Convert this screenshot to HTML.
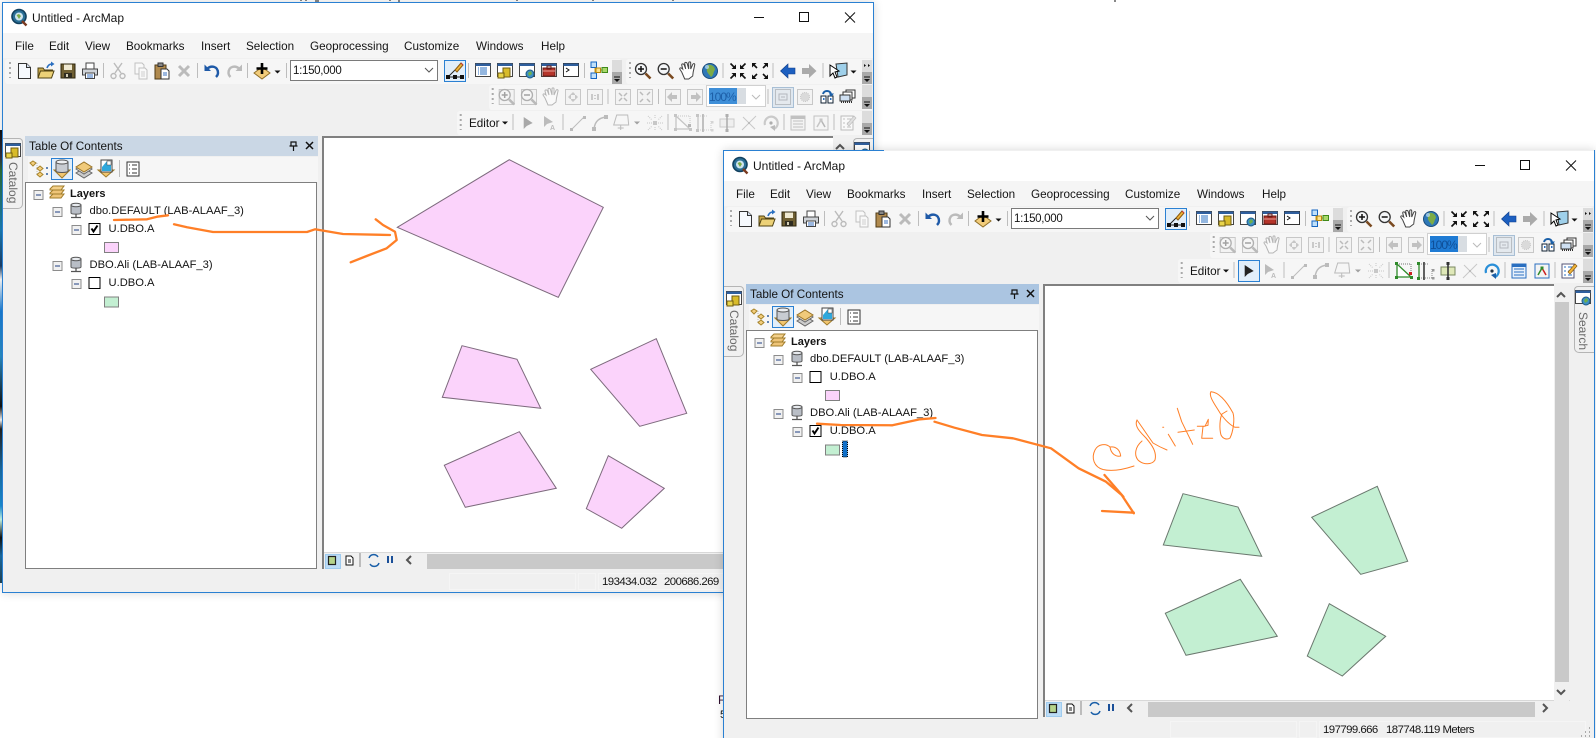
<!DOCTYPE html>
<html><head><meta charset="utf-8"><title>ArcMap</title>
<style>
html,body{margin:0;padding:0;background:#fff;width:1596px;height:738px;overflow:hidden}
#root{position:absolute;left:0;top:0;width:1596px;height:738px;overflow:hidden;background:#fff;font-family:"Liberation Sans",sans-serif;color:#141414}
.w{position:absolute;width:900px;height:592px}
.w>div,.abs{position:absolute;box-sizing:border-box}
.t{position:absolute;white-space:nowrap;line-height:16px;height:16px;font-size:11.7px}
.tr{font-size:11.2px}
.st{font-size:11.4px;letter-spacing:-.55px}
.v{position:absolute;white-space:nowrap;font-size:12px;line-height:14px;color:#6a6a6a;transform-origin:0 0;transform:rotate(90deg)}
.tb{background:#f6f6f6;border-radius:3px}
svg{position:absolute;left:0;top:0;overflow:visible}
.d{filter:grayscale(1);opacity:.36}
</style></head><body>
<div id="root">

<svg width="0" height="0" style="position:absolute">
<defs>
<g id="new"><path d="M-6-7.500h8l4 4V7.500H-6z" fill="#f6f9fd" stroke="#333"/><path d="M2-7.500v4h4" fill="#d5dfee" stroke="#333"/></g>
<g id="open"><path d="M-8 7V-3h5l1.500 2h8V2" fill="#c9a94a" stroke="#4f4112"/><path d="M-8 7l2.500-7H8L5.500 7z" fill="#ecd177" stroke="#4f4112"/><path d="M1-3C2-6 4-7 6-7" fill="none" stroke="#2a6fc0" stroke-width="1.600"/><path d="M5-9.500l3.500 2.500L5-4.500z" fill="#2a6fc0"/></g>
<g id="save"><rect x="-7" y="-7" width="14" height="14" fill="#6f5f33" stroke="#2e250c"/><rect x="-4" y="-6.500" width="8" height="5.500" fill="#efe9d2"/><rect x="-4" y="2" width="8" height="5" fill="#2f2c20"/><rect x="-2" y="3" width="2" height="3" fill="#d5cfb8"/></g>
<g id="print"><rect x="-4" y="-8" width="8" height="6" fill="#fff" stroke="#444"/><path d="M-7.500-2h15v6h-15z" fill="#cfd3d8" stroke="#444"/><rect x="-4.500" y="2" width="9" height="5.500" fill="#fff" stroke="#444"/><path d="M-3 4h6M-3 6h6" stroke="#3a72c0"/></g>
<g id="cut" fill="none" stroke="#555" stroke-width="1.400"><path d="M-3 2L4-8M3 2L-4-8"/><circle cx="-4.500" cy="5" r="2.500"/><circle cx="4.500" cy="5" r="2.500"/></g>
<g id="copy"><path d="M-6-8h7l2 2v9h-9z" fill="#fff" stroke="#666"/><path d="M-2-3h6l2 2v9h-8z" fill="#fff" stroke="#666"/><path d="M0 1h4M0 3h4M0 5h4" stroke="#888"/></g>
<g id="paste"><rect x="-7" y="-6" width="11" height="14" fill="#b08a4e" stroke="#4f3b16"/><rect x="-4" y="-8" width="5" height="3.500" fill="#888" stroke="#333"/><path d="M-1-2h6l2 2v8h-8z" fill="#fff" stroke="#333"/><path d="M1 2h4M1 4h4" stroke="#3a72c0"/></g>
<g id="del"><path d="M-5-5L5 5M5-5L-5 5" stroke="#555" stroke-width="3"/></g>
<g id="undo"><path d="M-5-2C-1-6 6-5 6 2 6 4 5 5 4 6" fill="none" stroke="#1f5aa8" stroke-width="2.400"/><path d="M-7.500-6.500V0h6.500z" fill="#1f5aa8"/></g>
<g id="redo"><path d="M5-2C1-6-6-5-6 2-6 4-5 5-4 6" fill="none" stroke="#2b5a9c" stroke-width="2.400"/><path d="M7.500-6.500V0H1z" fill="#2b5a9c"/></g>
<g id="add"><path d="M-8 2L0-4 8 2 0 8z" fill="#f2cc7a" stroke="#8f6e28"/><path d="M0-8V3M-5.500-2.500H5.500" stroke="#000" stroke-width="2.600"/></g>
<path id="dd" d="M-3-1.500h6L0 1.500z" fill="#111"/>
<g id="edt"><path d="M-7 6H7" stroke="#222"/><path d="M-7 6L0-1" stroke="#222"/><rect x="-9" y="4" width="4" height="4" fill="#111"/><rect x="-2" y="4" width="4" height="4" fill="#111"/><rect x="5" y="4" width="4" height="4" fill="#111"/><path d="M0-1L6-8 8-6 2 1z" fill="#efb43a" stroke="#8a5a10"/><path d="M6-8l2 2" stroke="#c33"/></g>
<g id="win"><rect x="-7.500" y="-6.500" width="15" height="13" fill="#fff" stroke="#444"/><rect x="-7.500" y="-6.500" width="15" height="2.500" fill="#2f5f9e"/></g>
<g id="tbl"><use href="#win"/><path d="M-5-2h1M-3-2h7M-5 0h1M-3 0h7M-5 2h1M-3 2h7M-5 4h1M-3 4h7" stroke="#2a6fc0"/></g>
<g id="cat"><use href="#win"/><path d="M-2-2h7v9h-7z" fill="#d8bb2a" stroke="#6f5c10"/><path d="M-7 3h6v5h-6z" fill="#e8d44a" stroke="#6f5c10"/></g>
<g id="srch"><use href="#win"/><circle cx="3" cy="4" r="4" fill="#3f8fc4" stroke="#1d5a86"/><path d="M1 3l3-2 1 3-3 2z" fill="#6fb04a"/></g>
<g id="tool"><use href="#win"/><rect x="-6" y="-2" width="12" height="8" fill="#b5342a" stroke="#6a1a14"/><rect x="-2" y="-4" width="4" height="3" fill="none" stroke="#6a1a14"/><path d="M-6 1h12" stroke="#e6a098"/></g>
<g id="py"><rect x="-7.500" y="-6.500" width="15" height="13" fill="#fff" stroke="#333"/><rect x="-7.500" y="-6.500" width="15" height="2.500" fill="#2f5f9e"/><path d="M-5-2l3 2-3 2" fill="none" stroke="#111"/></g>
<g id="mdl"><path d="M-4-5V5M-4 0H4" stroke="#c79a1a"/><rect x="-8" y="-8" width="5.500" height="5.500" fill="#bfe0fa" stroke="#1464c0"/><rect x="-8" y="3" width="5.500" height="5.500" fill="#bfe0fa" stroke="#1464c0"/><rect x="-3" y="-2" width="4.500" height="4.500" fill="#ffe38a" stroke="#b8860b"/><rect x="3" y="-2.500" width="5.500" height="5" fill="#a8d86a" stroke="#3f8a1a"/></g>
<g id="zin"><circle cx="-2" cy="-2" r="5.500" fill="#f4f6f8" stroke="#333" stroke-width="1.300"/><path d="M-5-2h6M-2-5v6" stroke="#111" stroke-width="1.500"/><path d="M2.500 2.500L7.500 7.500" stroke="#7a4a20" stroke-width="2.600"/></g>
<g id="zout"><circle cx="-2" cy="-2" r="5.500" fill="#f4f6f8" stroke="#333" stroke-width="1.300"/><path d="M-5-2h6" stroke="#111" stroke-width="1.500"/><path d="M2.500 2.500L7.500 7.500" stroke="#7a4a20" stroke-width="2.600"/></g>
<path id="hand" d="M-6 1L-8-2c0-2 2-1 3 0L-6-6c0-1.500 2-1.500 2.500 0L-2-2-3-7.500c0-1.500 2-1.500 2.500 0L1-2V-8c0-1.500 2-1.500 2 0V-2L5-6.500c.5-1.500 2.500-1 2 .5L5.500 1 5 5 1 8H-3z" fill="#fff" stroke="#444"/>
<g id="glb"><circle r="7.500" fill="#2f78b8" stroke="#1b4d7c"/><path d="M-2-6C2-7 5-4 5-1 3 1 4 4 1 6-1 3-4 1-3-2z" fill="#7cab46"/><circle cx="-3" cy="-4" r="2" fill="#bfe1f6" opacity=".7"/></g>
<g id="fzi"><g id="fq"><path d="M-2-2H-6.500L-2-6.500z" fill="#111"/><path d="M-7.500-7.500L-4-4" stroke="#111" stroke-width="1.600"/></g><use href="#fq" transform="scale(-1,1)"/><use href="#fq" transform="scale(1,-1)"/><use href="#fq" transform="scale(-1,-1)"/></g>
<g id="fzo"><g id="fr"><path d="M-8-8H-3.500L-8-3.500z" fill="#111"/><path d="M-3-3L-6-6" stroke="#111" stroke-width="1.600"/></g><use href="#fr" transform="scale(-1,1)"/><use href="#fr" transform="scale(1,-1)"/><use href="#fr" transform="scale(-1,-1)"/></g>
<path id="back" d="M-7.500 0L0-7V-3H7V3H0V7z" fill="#1c5fc0" stroke="#113f8a" stroke-width=".6"/>
<path id="fwd" d="M7.500 0L0-7V-3H-7V3H0V7z" fill="#aaa"/>
<g id="slc"><path d="M-2-7L9-8V4L0 6z" fill="#9fd0ea" stroke="#333"/><path d="M-8-6L1 0-3 1-1 6-3 7-5 2-8 5z" fill="#fff" stroke="#000"/></g>
<g id="bx"><rect x="-7.500" y="-7.500" width="15" height="15" fill="#eee" stroke="#777"/></g>
<g id="pg1"><use href="#bx"/><rect x="-4" y="-3" width="8" height="6" fill="none" stroke="#666"/><path d="M-2 0h4" stroke="#666"/></g>
<g id="gear"><use href="#bx"/><circle r="4.500" fill="#aaa" stroke="#777" stroke-dasharray="1 1"/></g>
<g id="ly1"><rect x="-6" y="-1" width="5" height="7" fill="#fff" stroke="#123"/><rect x="1" y="-1" width="5" height="7" fill="#fff" stroke="#123"/><rect x="-4" y="1" width="1.500" height="2" fill="#2a6fc0"/><rect x="3" y="1" width="1.500" height="2" fill="#2a6fc0"/><path d="M-4-3C-3-7 3-7 4-3" fill="none" stroke="#1a5fa8" stroke-width="2"/><path d="M2-3.500h5L4 0z" fill="#1a5fa8"/></g>
<g id="ly2"><rect x="-2" y="-7" width="9" height="8" fill="#fff" stroke="#333"/><rect x="-5" y="-5" width="9" height="8" fill="#fff" stroke="#333"/><rect x="-8" y="-2" width="10" height="6" fill="#cfe0f2" stroke="#333"/><path d="M-7 5h12" stroke="#333" stroke-width="2" stroke-dasharray="1 1"/></g>
<path id="sel" d="M-4-6V6L-1 3 5 0z" fill="#222"/>
<g id="ean"><path d="M-5-7V4L-2 1 4-1z" fill="#555"/><text x="1" y="7" font-size="7" font-family="Liberation Sans" font-weight="bold" fill="#555">A</text></g>
<g id="lin"><path d="M-6 6L6-6" stroke="#555"/><rect x="-8" y="5" width="3" height="3" fill="#555"/><rect x="5" y="-7" width="3" height="3" fill="#555"/></g>
<g id="arc"><path d="M-6 6C-5-2-1-5 6-6" fill="none" stroke="#555" stroke-width="1.500"/><rect x="-8" y="4" width="4" height="4" fill="#555"/><rect x="4" y="-8" width="4" height="4" fill="#555"/></g>
<g id="ply"><path d="M-5-7H6L7 3H-8z" fill="none" stroke="#555"/><path d="M-1 3v5M-4 6H2" stroke="#555"/></g>
<g id="sct" fill="#777"><path d="M-7-7l4 4M7-7l-4 4M-7 7l4-4M7 7l-4-4M-8 0h5M3 0h5M0-8v4M0 4v4" stroke="#777" stroke-dasharray="1 1"/><rect x="-2" y="-2" width="4" height="4"/></g>
<g id="rs1"><path d="M-7-7V6H7z" fill="#fff" stroke="#2f8a2a" stroke-width="1.300"/><path d="M-7-7H7V2" fill="none" stroke="#777" stroke-dasharray="1 1"/><rect x="-9" y="-9" width="3" height="3" fill="#2f8a2a"/><rect x="-9" y="5" width="3" height="3" fill="#2f8a2a"/><rect x="5" y="1" width="3" height="3" fill="#c22"/><rect x="6" y="5" width="3" height="3" fill="#2f8a2a"/></g>
<g id="rs2"><path d="M-7-7L-7 7" stroke="#2f8a2a" stroke-width="1.300"/><path d="M-7-7H2M-7 7H8M6-2V7" fill="none" stroke="#888" stroke-dasharray="1 1"/><path d="M-2-9V9" stroke="#111" stroke-width="1.300"/><rect x="-9" y="-9" width="3" height="3" fill="#2f8a2a"/><rect x="-9" y="6" width="3" height="3" fill="#2f8a2a"/><rect x="6" y="-2" width="2.500" height="2.500" fill="#999"/><rect x="6" y="6" width="2.500" height="2.500" fill="#999"/></g>
<g id="rs3"><rect x="-7" y="-4" width="14" height="8" fill="#dfe8b8" stroke="#7a8860"/><path d="M0-8V8" stroke="#333" stroke-width="1.600"/><rect x="-1.500" y="-9" width="3" height="3" fill="#333"/><rect x="-1.500" y="6" width="3" height="3" fill="#333"/></g>
<g id="crs"><path d="M-6-6L6 6M7-7L-7 7" stroke="#777"/><rect x="-1" y="-1" width="2" height="2" fill="#c33"/></g>
<g id="rot"><path d="M-6 2A6.500 6.500 0 1 1 3 6" fill="none" stroke="#2a8fd8" stroke-width="2.200"/><circle cy="0" r="1.600" fill="#234"/><path d="M-1 4l5-2v6z" fill="#1a5fa8"/></g>
<g id="atb"><rect x="-7" y="-7" width="14" height="14" fill="#e8f1fb" stroke="#2a6fc0"/><rect x="-7" y="-7" width="14" height="3" fill="#2a6fc0"/><path d="M-5-2H5M-5 1H5M-5 4H5" stroke="#2a6fc0"/></g>
<g id="skt"><rect x="-7" y="-7" width="14" height="14" fill="#f4f4f4" stroke="#2a6fc0"/><path d="M-4 4L0-3" stroke="#2f8a2a" stroke-width="1.500"/><path d="M0-3L4 4" stroke="#c22" stroke-width="1.500"/><rect x="-1.500" y="-4.500" width="3" height="3" fill="#2f8a2a"/></g>
<g id="tsk"><rect x="-7" y="-7" width="12" height="14" fill="#fff" stroke="#557"/><path d="M-5-4h2M-1-4h4M-5 0h2M-1 0h4M-5 4h2M-1 4h4" stroke="#2a6fc0"/><path d="M-1 1L6-7 8-5 1 3z" fill="#efb43a" stroke="#8a5a10" stroke-width=".7"/></g>
<g id="tocA"><path d="M-3-6V6H2M-3 0H2" fill="none" stroke="#bbb" stroke-dasharray="1 1"/><path d="M-7-8l3 2-3 3-3-3z" fill="#f4cf80" stroke="#a8852a"/><path d="M0-3l3 2.500L0 2l-3-2.500z" fill="#f4cf80" stroke="#a8852a"/><path d="M0 3l3 2.500L0 8l-3-2.500z" fill="#f4cf80" stroke="#a8852a"/><path d="M6-1h2M6 5h2" stroke="#2f5f9e" stroke-width="1.400"/></g>
<g id="tocB"><path d="M-8 1h16L0 9z" fill="#f2c670" stroke="#a07c2a"/><path d="M-6-7v9c0 2 12 2 12 0v-9z" fill="#c8ccd2" stroke="#555"/><ellipse cy="-7" rx="6" ry="2" fill="#eef0f3" stroke="#555"/></g>
<g id="tocC"><path d="M-8 4L0 9 8 4 0-1z" fill="#ccc" stroke="#666"/><path d="M-8 0L0 5 8 0 0-5z" fill="#e6e6e6" stroke="#666"/><path d="M-8-2L0 3 8-2 0-7z" fill="#f0ca7a" stroke="#9a7426"/></g>
<g id="tocD"><path d="M-8 2h16L0 9z" fill="#f2c670" stroke="#a07c2a"/><rect x="-5" y="-8" width="11" height="12" fill="#fff" stroke="#444"/><path d="M-4-1L1-7h4v10h-9z" fill="#2fa8dc"/><rect x="1" y="-7" width="4" height="4" fill="#fff" stroke="#444" stroke-width=".5"/></g>
<g id="tocE"><rect x="-6" y="-7" width="12" height="14" fill="#fff" stroke="#333"/><path d="M-4-4h1M-1-4h5M-4 0h1M-1 0h5M-4 4h1M-1 4h5" stroke="#333"/></g>
<g id="dbi"><path d="M-5-6V2c0 1.500 10 1.500 10 0V-6z" fill="#b9bec6" stroke="#555"/><ellipse cy="-6" rx="5" ry="1.800" fill="#e8ebef" stroke="#555"/><path d="M0 3V6M-5 6.500H5" stroke="#555" stroke-width="1.300"/></g>
<g id="lay"><path d="M-7 4L-4 1H7L4 5H-7z" fill="#eec478" stroke="#a07c2a"/><path d="M-7 0L-4-3H7L4 1H-7z" fill="#eec478" stroke="#a07c2a"/><path d="M-7-4L-4-7H7L4-3H-7z" fill="#f3d08a" stroke="#a07c2a"/></g>
<g id="mn"><rect x="-4.500" y="-4.500" width="9" height="9" fill="#f1f1f1" stroke="#8c8c8c"/><path d="M-2.500 0H2.500" stroke="#1e3f82"/></g>
<g id="cbx"><rect x="-5.500" y="-5.500" width="11" height="11" fill="#fff" stroke="#000" stroke-width="1"/></g>
<g id="cbc"><use href="#cbx"/><path d="M-3-.5L-1 2.500 3-3.500" fill="none" stroke="#000" stroke-width="2"/></g>
<g id="cap"><path d="M-4 2L0-2 4 2" fill="none" stroke="#555" stroke-width="2"/></g>
<g id="cav"><path d="M-4-2L0 2 4-2" fill="none" stroke="#555" stroke-width="2"/></g>
<g id="ovf"><rect x="-5" y="-12" width="10" height="24" fill="#dcdcdc"/><rect x="-5" y="0" width="10" height="12" fill="#a9a9a9"/><path d="M-3 5h6" stroke="#111"/><path d="M-3 7h6l-3 3z" fill="#111"/></g>
<g id="cog1"><use href="#bx"/><path d="M-4-4l3 3M4-4L1-1M-4 4l3-3M4 4L1 1" stroke="#555" stroke-width="1.500"/></g>
<g id="cog2"><use href="#bx"/><path d="M-2-2l-3-3M2-2l3-3M-2 2l-3 3M2 2l3 3" stroke="#555" stroke-width="1.500"/></g>
<g id="bk2"><use href="#bx"/><path d="M-6 0l5-5v3h5v4h-5v3z" fill="#666"/></g>
<g id="fw2"><use href="#bx"/><path d="M6 0L1-5v3h-5v4H1v3z" fill="#666"/></g>
<g id="o11"><use href="#bx"/><path d="M-3-3v6M3-3v6M0-2v1M0 1v1" stroke="#555" stroke-width="1.500"/></g>
<g id="ozm"><use href="#bx"/><path d="M0-5L3-2H-3zM0 5L3 2H-3zM-5 0l3-3V3zM5 0L2-3V3z" fill="#777"/></g>
<g id="zin2"><use href="#bx"/><use href="#zin"/></g>
<g id="zout2"><use href="#bx"/><use href="#zout"/></g>
<g id="logo"><circle cx="0" cy="-.5" r="7" fill="#2a6f96" stroke="#12405e" stroke-width="1.600"/><circle cx="0" cy="-.5" r="4" fill="#cfe4ee"/><path d="M-2.500-2l2.500-1 2 2-2 3z" fill="#7cab46"/><path d="M3 4l4.500 4.500" stroke="#7a3a20" stroke-width="2.400"/></g>

<!-- shared toolbars, origin = window 1 page coordinates -->
<g id="row12">
<path d="M10 62v16M630 62v16M492.700 88v16M460.700 114v16" stroke="#aaa" stroke-width="2" stroke-dasharray="2 3"/>
<path d="M103.500 63v15M197.500 63v15M247.500 63v15M286.500 63v15M468.500 63v15M584.500 63v15M723 63v15M773 63v15M823 63v15M608 89v15M658.500 89v15M768 89v15" stroke="#bdbdbd"/>
<use href="#new" x="24.500" y="71"/><use href="#open" x="46" y="71"/><use href="#save" x="68" y="71"/><use href="#print" x="90" y="71"/>
<use href="#cut" x="118" y="71" class="d"/><use href="#copy" x="141" y="71" class="d"/><use href="#paste" x="162" y="71"/><use href="#del" x="184" y="71" class="d"/>
<use href="#undo" x="212" y="71"/><use href="#redo" x="234.500" y="71" class="d"/><use href="#add" x="262" y="71"/><use href="#dd" x="277.500" y="72"/>
<use href="#edt" x="455" y="71"/>
<use href="#tbl" x="483" y="70"/><use href="#cat" x="505" y="70"/>
<use href="#srch" x="527" y="70"/><use href="#tool" x="549" y="70"/><use href="#py" x="571" y="70"/><use href="#mdl" x="599" y="70"/>
<use href="#zin" x="643" y="71"/><use href="#zout" x="665.700" y="71"/><use href="#hand" x="687.700" y="71"/><use href="#glb" x="710" y="71"/>
<use href="#fzi" x="738" y="71"/><use href="#fzo" x="760" y="71"/><use href="#back" x="788" y="71"/><use href="#fwd" x="809" y="71"/>
<use href="#slc" x="838" y="71"/><use href="#dd" x="853.500" y="72"/>
<use href="#ovf" x="617" y="72"/><use href="#ovf" x="867" y="72"/><path d="M864 64l2 1.500-2 1.500zM868 64l2 1.500-2 1.500z" fill="#111"/>
<g class="d"><use href="#zin2" x="506.700" y="97"/><use href="#zout2" x="529" y="97"/><use href="#hand" x="551" y="97"/><use href="#ozm" x="573" y="97"/><use href="#o11" x="595" y="97"/><use href="#cog1" x="623" y="97"/><use href="#cog2" x="645" y="97"/><use href="#bk2" x="673" y="97"/><use href="#fw2" x="695" y="97"/><use href="#pg1" x="783" y="97"/><use href="#gear" x="805" y="97"/></g>
<use href="#ly1" x="827" y="97"/><use href="#ly2" x="848" y="97"/>
<use href="#ovf" x="867" y="97"/>
<use href="#ovf" x="867" y="123"/>
<path d="M513 114v16M563 114v16M668 114v16M784 114v16M834 114v16" stroke="#bdbdbd"/>
<use href="#dd" x="505" y="123"/>
<g class="d"><use href="#ean" x="549" y="123"/><use href="#lin" x="578" y="123"/><use href="#arc" x="600" y="123"/><use href="#ply" x="621.700" y="122"/><use href="#dd" x="637" y="123"/><use href="#sct" x="655" y="123"/></g>
<path d="M119.500 160v17" stroke="#bdbdbd"/>
<use href="#tocA" x="40" y="169"/><use href="#tocB" x="62" y="169"/><use href="#tocC" x="84" y="169"/><use href="#tocD" x="106" y="168"/><use href="#tocE" x="133" y="169"/>
<use href="#cat" x="13" y="150"/>
<path d="M291 142h5v4h-5zM289.500 146h8M293.500 146v5" fill="none" stroke="#111" stroke-width="1.200"/>
<path d="M306 142l7 7M313 142l-7 7" stroke="#111" stroke-width="1.500"/>
<path d="M754 17.500h10" stroke="#111"/><rect x="799.500" y="12.500" width="9" height="9" fill="none" stroke="#111"/><path d="M845 12.500l10 10M855 12.500l-10 10" stroke="#111"/>
<path d="M425 68l4 4 4-4" fill="none" stroke="#555"/><path d="M752 95l4 4 4-4" fill="none" stroke="#bbb"/>
<use href="#cap" x="840" y="147"/>
<use href="#logo" x="19" y="17"/>
<use href="#mn" x="38.500" y="195"/><use href="#lay" x="57" y="193"/>
<use href="#mn" x="57.500" y="212"/><use href="#dbi" x="76" y="211"/>
<use href="#mn" x="76.500" y="230"/>
<rect x="104.500" y="242.500" width="14" height="10" fill="#fbd3fb" stroke="#808080"/>
<use href="#mn" x="57.500" y="266"/><use href="#dbi" x="76" y="265"/>
<use href="#mn" x="76.500" y="284"/>
<rect x="104.500" y="297" width="14" height="10" fill="#c3efd2" stroke="#808080"/>
<rect x="328.500" y="556.500" width="7" height="8" fill="#b6d48a" stroke="#222" stroke-width="1.200"/>
<path d="M346 556h5l2 2v7h-7zM348 560h3M348 562h3" fill="#fff" stroke="#111"/>
<path d="M360 553v14" stroke="#888"/>
<path d="M369 558a5 5 0 0 1 9-1M379 563a5 5 0 0 1-9 1" fill="none" stroke="#1a5fa8" stroke-width="1.500"/>
<path d="M388 556v7M392 556v7" stroke="#1a4f98" stroke-width="2"/>
<path d="M411 556l-4 4 4 4" fill="none" stroke="#555" stroke-width="2"/>
<use href="#srch" x="862" y="149"/>
</g>
</defs>
</svg>

<!-- desktop fragments behind window 1 -->
<div class="abs" style="left:0;top:130px;width:2px;height:453px;background:linear-gradient(#111 0,#334 6%,#2a6f3a 9%,#1a7fb8 22%,#1a3f6a 30%,#fff 33%,#1a7fd8 40%,#2a8fc8 50%,#111 61%,#fff 64%,#222 66%,#1a6fa8 75%,#1a90d8 83%,#cfe 86%,#111 90%,#1a6fa8 94%,#245 100%)"></div>
<svg width="1596" height="4"><path d="M301 0v1M306 0v1M316 0v2M318 0v2M390 0v1M399 0v2M517 0v1M593 0v1M673 0v1M1115 0v2" stroke="#111"/></svg>
<div class="t" style="left:718px;top:692px;color:#301030;font-size:12px">F</div>
<div class="t" style="left:720px;top:707px;font-size:11px">5</div>

<!-- ================= WINDOW 1 ================= -->
<div class="w" style="left:0;top:0">
<div style="left:2px;top:2px;width:872px;height:591px;background:#f0f0f0;border:1px solid #2a80d2;box-shadow:0 0 9px rgba(0,0,0,.16)"></div>
<div style="left:3px;top:3px;width:870px;height:30px;background:#fff"></div>
<div style="left:3px;top:33px;width:870px;height:25px;background:#f5f5f5"></div>
<div class="tb" style="left:5px;top:59px;width:617px;height:25px"></div>
<div class="tb" style="left:626px;top:59px;width:246px;height:25px"></div>
<div class="tb" style="left:489px;top:85px;width:383px;height:25px"></div>
<div class="tb" style="left:457px;top:111px;width:415px;height:24px"></div>
<div style="left:290px;top:60px;width:148px;height:21px;background:#fff;border:1px solid #7a7a7a"></div>
<div style="left:444px;top:60px;width:22px;height:22px;background:#e1eefa;border:1px solid #2a80d2"></div>
<div style="left:706px;top:85px;width:60px;height:22px;background:#fff;border:1px solid #d0d0d0"></div>
<div style="left:709px;top:88px;width:37px;height:16px;background:#d8dde2"></div>
<div style="left:709px;top:88px;width:28px;height:16px;background:#3f8fd8"></div>
<div style="left:772px;top:87px;width:22px;height:21px;background:#dfe7ef;border:1px solid #a8bfd5"></div>
<!-- toc -->
<div style="left:25px;top:136px;width:293px;height:20px;background:#cad7e5"></div>
<div style="left:28px;top:157px;width:290px;height:25px;background:#f6f6f6"></div>
<div style="left:51px;top:158px;width:22px;height:22px;background:#e1eefa;border:1px solid #2a80d2"></div>
<div style="left:25px;top:182px;width:292px;height:387px;background:#fff;border:1px solid #7f7f7f"></div>
<div style="left:3px;top:138px;width:20px;height:71px;background:#f0f0f0;border:1px solid #b5b5b5;border-left:0;border-radius:0 4px 5px 0"></div>
<!-- map -->
<div style="left:322px;top:136px;width:511px;height:433px;background:#fff;border-left:2px solid #808080;border-top:2px solid #808080"></div>
<div style="left:324px;top:552px;width:509px;height:17px;background:#f0f0f0;border-top:1px solid #d8d8d8"></div>
<div style="left:325px;top:554px;width:16px;height:15px;background:#bcdcf6;border:1px solid #9fcbee"></div>
<div style="left:427px;top:554px;width:300px;height:15px;background:#c9c9c9"></div>
<div style="left:833px;top:138px;width:15px;height:415px;background:#f0f0f0"></div>
<div style="left:834px;top:154px;width:14px;height:380px;background:#c9c9c9"></div>
<div style="left:853px;top:138px;width:20px;height:67px;background:#f0f0f0;border:1px solid #b5b5b5;border-right:0;border-radius:4px 0 0 5px"></div>
<div style="left:449px;top:573px;width:127px;height:17px;border:1px solid #f5f5f5"></div>
<div style="left:578px;top:573px;width:18px;height:17px;border:1px solid #f5f5f5"></div>
<div style="left:598px;top:573px;width:130px;height:17px;border:1px solid #f5f5f5"></div>

<svg width="900" height="592">
<use href="#row12"/>
<g class="d"><use href="#sel" x="527.700" y="123"/><use href="#rs1" x="683" y="123"/><use href="#rs2" x="705" y="123"/><use href="#rs3" x="727" y="123"/><use href="#crs" x="749" y="123"/><use href="#rot" x="771" y="123"/><use href="#atb" x="798" y="123"/><use href="#skt" x="821" y="123"/><use href="#tsk" x="848" y="123"/></g>
<use href="#cbc" x="94.500" y="229"/><use href="#cbx" x="94.500" y="283"/>
<g fill="#fbd3fb" stroke="#7d6a7d" stroke-width="1">
<polygon points="397.300,227.300 509.300,159.700 603.300,207.300 558.300,297.300"/>
<polygon points="462,345.700 517,359.300 540.700,408.300 442.300,397.300"/>
<polygon points="656.300,338.700 686.700,413.300 639.700,426.300 590.700,369.300"/>
<polygon points="519.300,431.700 556.300,488.300 465.300,507.300 444.300,465.300"/>
<polygon points="608.300,455.700 664.300,488.300 621.700,528.300 586.300,508.700"/>
</g>
</svg>

<div class="t" style="left:32px;top:10px;font-size:12px">Untitled - ArcMap</div>
<div class="t" style="left:15px;top:39px">File</div><div class="t" style="left:49px;top:39px">Edit</div><div class="t" style="left:85px;top:39px">View</div><div class="t" style="left:126px;top:39px">Bookmarks</div><div class="t" style="left:201px;top:39px">Insert</div><div class="t" style="left:246px;top:39px">Selection</div><div class="t" style="left:310px;top:39px">Geoprocessing</div><div class="t" style="left:404px;top:39px">Customize</div><div class="t" style="left:476px;top:39px">Windows</div><div class="t" style="left:541px;top:39px">Help</div>
<div class="t" style="left:293px;top:63px;font-size:11.500px;letter-spacing:-.3px">1:150,000</div>
<div class="t" style="left:709px;top:89px;font-size:12px;letter-spacing:-1px;color:#1d5fa8">100%</div>
<div class="t" style="left:469px;top:116px">Editor</div>
<div class="t" style="left:29px;top:139px">Table Of Contents</div>
<div class="v" style="left:20px;top:162px">Catalog</div>
<div class="v" style="left:869px;top:164px">Search</div>
<div class="t" style="left:70px;top:186px;font-weight:bold;font-size:11px">Layers</div>
<div class="t tr" style="left:89.500px;top:203px">dbo.DEFAULT (LAB-ALAAF_3)</div>
<div class="t tr" style="left:108.500px;top:221px">U.DBO.A</div>
<div class="t tr" style="left:89.500px;top:257px">DBO.Ali (LAB-ALAAF_3)</div>
<div class="t tr" style="left:108.500px;top:275px">U.DBO.A</div>
<div class="t st" style="left:602px;top:574px">193434.032</div>
<div class="t st" style="left:664px;top:574px">200686.269</div>
</div>

<!-- ================= WINDOW 2 ================= -->
<div class="w" style="left:721px;top:148px">
<div style="left:2px;top:2px;width:872px;height:600px;background:#f0f0f0;border:1px solid #2a80d2;border-top:0;box-shadow:0 0 9px rgba(0,0,0,.16)"></div>
<div style="left:2px;top:2px;width:161px;height:1px;background:#2a80d2"></div>
<div style="left:3px;top:3px;width:870px;height:30px;background:#fff"></div>
<div style="left:3px;top:33px;width:870px;height:25px;background:#f5f5f5"></div>
<div class="tb" style="left:5px;top:59px;width:617px;height:25px"></div>
<div class="tb" style="left:626px;top:59px;width:246px;height:25px"></div>
<div class="tb" style="left:489px;top:85px;width:383px;height:25px"></div>
<div class="tb" style="left:457px;top:111px;width:415px;height:24px"></div>
<div style="left:290px;top:60px;width:148px;height:21px;background:#fff;border:1px solid #7a7a7a"></div>
<div style="left:444px;top:60px;width:22px;height:22px;background:#e1eefa;border:1px solid #2a80d2"></div>
<div style="left:706px;top:85px;width:60px;height:22px;background:#fff;border:1px solid #d0d0d0"></div>
<div style="left:709px;top:88px;width:37px;height:16px;background:#d8dde2"></div>
<div style="left:709px;top:88px;width:28px;height:16px;background:#1f7bd4"></div>
<div style="left:772px;top:87px;width:22px;height:21px;background:#dfe7ef;border:1px solid #a8bfd5"></div>
<div style="left:517px;top:112px;width:22px;height:22px;background:#e1eefa;border:1px solid #2a80d2"></div>
<!-- toc -->
<div style="left:25px;top:136px;width:293px;height:20px;background:#abc5e1"></div>
<div style="left:28px;top:157px;width:290px;height:25px;background:#f6f6f6"></div>
<div style="left:51px;top:158px;width:22px;height:22px;background:#e1eefa;border:1px solid #2a80d2"></div>
<div style="left:25px;top:182px;width:292px;height:389px;background:#fff;border:1px solid #7f7f7f"></div>
<div style="left:3px;top:138px;width:20px;height:71px;background:#f0f0f0;border:1px solid #b5b5b5;border-left:0;border-radius:0 4px 5px 0"></div>
<!-- map -->
<div style="left:322px;top:136px;width:511px;height:433px;background:#fff;border-left:2px solid #808080;border-top:2px solid #808080"></div>
<div style="left:324px;top:552px;width:525px;height:17px;background:#f0f0f0;border-top:1px solid #d8d8d8"></div>
<div style="left:325px;top:554px;width:16px;height:15px;background:#bcdcf6;border:1px solid #9fcbee"></div>
<div style="left:427px;top:554px;width:387px;height:15px;background:#c9c9c9"></div>
<div style="left:833px;top:138px;width:15px;height:415px;background:#f0f0f0"></div>
<div style="left:834px;top:154px;width:14px;height:380px;background:#c9c9c9"></div>
<div style="left:853px;top:138px;width:20px;height:67px;background:#f0f0f0;border:1px solid #b5b5b5;border-right:0;border-radius:4px 0 0 5px"></div>
<div style="left:449px;top:573px;width:127px;height:17px;border:1px solid #f5f5f5"></div>
<div style="left:578px;top:573px;width:18px;height:17px;border:1px solid #f5f5f5"></div>
<div style="left:598px;top:573px;width:267px;height:17px;border:1px solid #f5f5f5"></div>

<svg width="900" height="592">
<use href="#row12"/>
<use href="#sel" x="527.700" y="123"/><use href="#rs1" x="683" y="123"/><use href="#rs2" x="705" y="123"/><use href="#rs3" x="727" y="123"/><g class="d"><use href="#crs" x="749" y="123"/></g><use href="#rot" x="771" y="123"/><use href="#atb" x="798" y="123"/><use href="#skt" x="821" y="123"/><use href="#tsk" x="848" y="123"/>
<use href="#cav" x="840" y="544"/>
<use href="#cbx" x="94.500" y="229"/><use href="#cbc" x="94.500" y="283"/>
<rect x="121.500" y="293" width="5" height="16" fill="#0f6fc8" stroke="#000" stroke-dasharray="1 1"/>
<path d="M822 556l4 4-4 4" fill="none" stroke="#555" stroke-width="2"/>
<path d="M864 584h1M868 580h1M868 584h1M864 588h1M868 588h1M860 588h1" stroke="#aaa" stroke-width="2"/>
<g fill="#c3efd2" stroke="#6a786e" stroke-width="1" transform="translate(-721,-148)">
<polygon points="1183,493.700 1238,507 1261.700,556.300 1163.300,545"/>
<polygon points="1377.300,486.300 1407.700,561.300 1360.700,574.300 1311.700,517.300"/>
<polygon points="1240.300,579.300 1277.300,636.300 1186,655.300 1165.300,613.300"/>
<polygon points="1329.300,603.700 1385.700,636.300 1342.300,676 1307.300,656"/>
</g>
</svg>

<div class="t" style="left:32px;top:10px;font-size:12px">Untitled - ArcMap</div>
<div class="t" style="left:15px;top:39px">File</div><div class="t" style="left:49px;top:39px">Edit</div><div class="t" style="left:85px;top:39px">View</div><div class="t" style="left:126px;top:39px">Bookmarks</div><div class="t" style="left:201px;top:39px">Insert</div><div class="t" style="left:246px;top:39px">Selection</div><div class="t" style="left:310px;top:39px">Geoprocessing</div><div class="t" style="left:404px;top:39px">Customize</div><div class="t" style="left:476px;top:39px">Windows</div><div class="t" style="left:541px;top:39px">Help</div>
<div class="t" style="left:293px;top:63px;font-size:11.500px;letter-spacing:-.3px">1:150,000</div>
<div class="t" style="left:709px;top:89px;font-size:12px;letter-spacing:-1px;color:#0f4f98">100%</div>
<div class="t" style="left:469px;top:116px">Editor</div>
<div class="t" style="left:29px;top:139px">Table Of Contents</div>
<div class="v" style="left:20px;top:162px">Catalog</div>
<div class="v" style="left:869px;top:164px">Search</div>
<div class="t" style="left:70px;top:186px;font-weight:bold;font-size:11px">Layers</div>
<div class="t tr" style="left:89px;top:203px">dbo.DEFAULT (LAB-ALAAF_3)</div>
<div class="t tr" style="left:108.700px;top:221px">U.DBO.A</div>
<div class="t tr" style="left:89px;top:257px">DBO.Ali (LAB-ALAAF_3)</div>
<div class="t tr" style="left:108.700px;top:275px">U.DBO.A</div>
<div class="t st" style="left:602px;top:574px">197799.666</div>
<div class="t st" style="left:665px;top:574px">187748.119 Meters</div>
</div>

<!-- hand-drawn orange annotations -->
<svg width="1596" height="738" fill="none" stroke="#ff7f27" stroke-linejoin="round" stroke-linecap="round" style="z-index:5">
<g stroke-width="2.300">
<path d="M114 220L147 219.300 157 216.700 168 215.300"/>
<path d="M174 224.300L187 227.300 213 232 307 232 315 229.300 343 234 390 235"/>
<path d="M375.700 219.300L383 225 395 231.700 396.700 240 386.700 248.300 366.700 256 350.700 262.300"/>
<path d="M817 423.700L840.700 425 892.400 425.300 920 419.300 935.500 418"/>
<path d="M934.500 421.700L954.500 427.700 982 435 1013 438.300 1051 448.300 1078.600 468.300 1106 481.700 1121.700 495 1133.800 513.300"/>
<path d="M1102 511L1133.800 512.700M1104.500 475L1123.400 496.700"/>
</g>
<g stroke-width="1">
<path d="M1110 447C1116 446 1120 450 1120.700 456 1116 457 1111 454 1110 447 1106 443 1098 444 1095 450 1091 458 1094 467 1103 469.500 1113 472 1125 469 1134 466"/>
<path d="M1137 420C1134 426 1140 432 1146 438 1152 445 1157 452 1155 460 1152 465 1143 465 1138 460 1134 455 1135 447 1142 441"/>
<path d="M1137 420C1142 427 1148 436 1153 443 1158 446 1162 448 1167 450"/>
<path d="M1168.300 434.300L1175.300 446M1162.700 427.300h1"/>
<path d="M1177.300 408.300L1181.700 421.700 1192.700 444.300M1178 432.300L1194.300 430"/>
<path d="M1197.300 426.300L1205 426.300 1208.300 419.300 1208 425.300 1203 426.500 1201.700 438.300 1212.700 438.300"/>
<path d="M1211 391.700C1208 396 1216 406 1220 413 1225 420 1230 425 1235 427.300L1239 427.300"/>
<path d="M1211 391.700C1218 392 1226 400 1233 413 1235 420 1233 432 1230 438 1227 440 1223 439 1221 435 1219 428 1220 418 1222 414L1227 411"/>
</g>
</svg>
</div>
</body></html>
